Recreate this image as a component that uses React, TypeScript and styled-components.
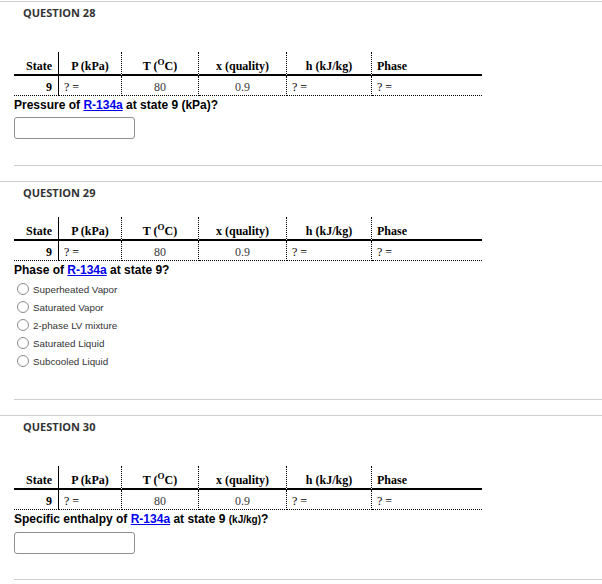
import styled, { createGlobalStyle } from "styled-components";

const GlobalStyle = createGlobalStyle`
  html, body {
    margin: 0;
    padding: 0;
    background: #fff;
  }
  body {
    font-family: "Liberation Sans", Arial, sans-serif;
  }
`;

const serif = `"Liberation Serif", "Times New Roman", serif`;

const Page = styled.div`
  padding-top: 1px;
  width: 602px;
`;

const Question = styled.section`
  border-top: 1px solid #cfcfcf;
`;

const Title = styled.h3`
  margin: 0;
  padding: 3px 0 0 23px;
  font-family: "Open Sans", sans-serif;
  font-size: 11px;
  font-weight: 700;
  line-height: 15px;
  color: #333;
`;

const Body = styled.div<{ $lead: number }>`
  padding: ${(p) => p.$lead}px 0 0 14px;
`;

const Table = styled.table`
  border-collapse: separate;
  border-spacing: 0;
  font-family: ${serif};
  font-size: 12px;
  color: #000;
`;

type Align = "left" | "center" | "right";

const Head = styled.th<{ $w: number; $align: Align; $solid?: boolean; $last?: boolean }>`
  width: ${(p) => p.$w}px;
  box-sizing: border-box;
  height: 24px;
  padding: 0 6px 1px 6px;
  vertical-align: bottom;
  text-align: ${(p) => p.$align};
  font-family: ${serif};
  font-size: 12px;
  font-weight: 700;
  line-height: 14px;
  white-space: nowrap;
  border-bottom: 2px solid #000;
  border-right: ${(p) =>
    p.$last ? "none" : p.$solid ? "1px solid #000" : "1px dotted #000"};
  ${(p) => (p.$align === "left" ? "padding-left: 5px;" : "")}
`;

const Cell = styled.td<{ $align: Align; $solid?: boolean; $last?: boolean; $bold?: boolean; $muted?: boolean }>`
  box-sizing: border-box;
  height: 20px;
  padding: 4px 6px 1px 6px;
  vertical-align: top;
  text-align: ${(p) => p.$align};
  font-family: ${serif};
  font-size: 12px;
  line-height: 14px;
  font-weight: ${(p) => (p.$bold ? 700 : 400)};
  color: ${(p) => (p.$muted ? "#3a3a3a" : "#000")};
  border-bottom: 1px dotted #000;
  border-right: ${(p) =>
    p.$last ? "none" : p.$solid ? "1px solid #000" : "1px dotted #000"};
  ${(p) => (p.$align === "left" ? "padding-left: 5px;" : "")}
`;

const Sup = styled.sup`
  font-size: 9px;
  line-height: 0;
`;

const Prompt = styled.p`
  margin: 2px 0 0;
  font-size: 12px;
  font-weight: 700;
  line-height: 14px;
  color: #000;
`;

const Small = styled.span`
  font-size: 10px;
`;

const Term = styled.a`
  color: #0000ee;
  text-decoration: underline;
  cursor: pointer;
`;

const Answer = styled.input`
  display: block;
  box-sizing: border-box;
  margin: 5px 0 0;
  width: 121px;
  height: 22px;
  border: 1px solid #8f8f8f;
  border-radius: 3px;
  background: #fff;
  padding: 0 4px;
`;

const Choices = styled.ul`
  list-style: none;
  margin: 3px 0 0;
  padding: 0 0 0 3px;
`;

const Choice = styled.li`
  display: flex;
  align-items: center;
  gap: 4px;
  height: 18px;
  font-size: 9.8px;
  color: #333;
`;

const Radio = styled.input`
  appearance: none;
  flex: none;
  margin: 0;
  width: 12px;
  height: 12px;
  border: 1px solid #8c8c8c;
  border-radius: 50%;
  background: #fff;
`;

const Divider = styled.div<{ $after: number }>`
  margin: ${(p) => p.$after}px 0 15px 14px;
  height: 1px;
  background: #cfcfcf;
`;

const columns: { label: React.ReactNode; w: number; head: Align; data: Align }[] = [
  { label: "State", w: 45, head: "right", data: "right" },
  { label: "P (kPa)", w: 63, head: "center", data: "left" },
  { label: <>T (<Sup>O</Sup>C)</>, w: 77, head: "center", data: "center" },
  { label: "x (quality)", w: 88, head: "center", data: "center" },
  { label: "h (kJ/kg)", w: 85, head: "center", data: "left" },
  { label: "Phase", w: 110, head: "left", data: "left" },
];

const row = ["9", "? =", "80", "0.9", "? =", "? ="];

const StateTable = () => (
  <Table>
    <thead>
      <tr>
        {columns.map((c, i) => (
          <Head key={i} $w={c.w} $align={c.head} $solid={i === 0} $last={i === columns.length - 1}>
            {c.label}
          </Head>
        ))}
      </tr>
    </thead>
    <tbody>
      <tr>
        {row.map((v, i) => (
          <Cell
            key={i}
            $align={columns[i].data}
            $solid={i === 0}
            $last={i === row.length - 1}
            $bold={i === 0}
            $muted={i === 2 || i === 3}
          >
            {v}
          </Cell>
        ))}
      </tr>
    </tbody>
  </Table>
);

const phases = [
  "Superheated Vapor",
  "Saturated Vapor",
  "2-phase LV mixture",
  "Saturated Liquid",
  "Subcooled Liquid",
];

export default function App() {
  return (
    <Page>
      <GlobalStyle />
      <Question>
        <Title>QUESTION 28</Title>
        <Body $lead={32}>
          <StateTable />
          <Prompt>
            Pressure of <Term>R-134a</Term> at state 9 (kPa)?
          </Prompt>
          <Answer type="text" />
        </Body>
        <Divider $after={26} />
      </Question>
      <Question>
        <Title>QUESTION 29</Title>
        <Body $lead={17}>
          <StateTable />
          <Prompt>
            Phase of <Term>R-134a</Term> at state 9?
          </Prompt>
          <Choices>
            {phases.map((p) => (
              <Choice key={p}>
                <Radio type="radio" name="q29" />
                {p}
              </Choice>
            ))}
          </Choices>
        </Body>
        <Divider $after={29} />
      </Question>
      <Question>
        <Title>QUESTION 30</Title>
        <Body $lead={32}>
          <StateTable />
          <Prompt>
            Specific enthalpy of <Term>R-134a</Term> at state 9 <Small>(kJ/kg)</Small>?
          </Prompt>
          <Answer type="text" />
        </Body>
        <Divider $after={25} />
      </Question>
    </Page>
  );
}
